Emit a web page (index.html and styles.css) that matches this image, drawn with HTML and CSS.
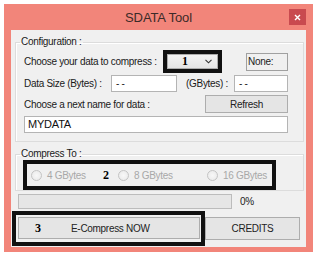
FILE: index.html
```html
<!DOCTYPE html>
<html>

<head>
    <title>SDATA Tool</title>
    <meta name="viewport" content="width=device-width, initial-scale=1.0">
    <link rel="stylesheet" href="styles.css">
</head>

<body>
    <div class="window">
        <div class="titlebar">
            <span class="title">SDATA Tool</span>
            <span class="close">
                <svg width="7" height="7" viewBox="0 0 7 7">
                    <path d="M1 1 L6 6 M6 1 L1 6" stroke="#fff" stroke-width="1.4" fill="none" />
                </svg>
            </span>
        </div>

        <div class="client">
            <fieldset class="group group-config">
                <legend>Configuration :</legend>

                <div class="row row-source">
                    <span class="label label-source">Choose your data to compress :</span>
                    <div class="mark mark-combo">
                        <div class="combo">
                            <span class="num">1</span>
                            <svg class="chevron" width="7" height="5" viewBox="0 0 7 5">
                                <path d="M0.5 0.8 L3.5 3.8 L6.5 0.8" stroke="#333" stroke-width="1.1" fill="none" />
                            </svg>
                        </div>
                    </div>
                    <span class="info">None:</span>
                </div>

                <div class="row row-size">
                    <span class="label label-bytes">Data Size (Bytes) :</span>
                    <span class="textbox tb-bytes">- -</span>
                    <span class="label label-gb">(GBytes) :</span>
                    <span class="textbox tb-gb">- -</span>
                </div>

                <div class="row row-name">
                    <span class="label">Choose a next name for data :</span>
                    <button class="btn btn-refresh">Refresh</button>
                </div>

                <div class="row row-input">
                    <span class="textbox tb-name">MYDATA</span>
                </div>
            </fieldset>

            <fieldset class="group group-size">
                <legend>Compress To :</legend>
                <div class="mark mark-radios">
                    <span class="option option-4">
                        <span class="radio"></span>4 GBytes
                    </span>
                    <span class="num num-2">2</span>
                    <span class="option option-8">
                        <span class="radio"></span>8 GBytes
                    </span>
                    <span class="option option-16">
                        <span class="radio"></span>16 GBytes
                    </span>
                </div>
            </fieldset>

            <div class="progress-row">
                <div class="progress"></div>
                <span class="percent">0%</span>
            </div>

            <div class="actions">
                <div class="mark mark-compress">
                    <button class="btn btn-compress">
                        <span class="num num-3">3</span>
                        <span>E-Compress NOW</span>
                    </button>
                </div>
                <button class="btn btn-credits">CREDITS</button>
            </div>
        </div>
    </div>
</body>

</html>
```

FILE: styles.css
```css
body {
    margin: 0;
    background: #fff;
    font-family: 'Liberation Sans', Arial, sans-serif;
    font-size: 10px;
    letter-spacing: -0.3px;
    color: #1a1a1a;
}

.window {
    margin: 4px 0 0 4px;
    width: 309px;
    height: 248px;
    background: #f2857a;
    display: flex;
    flex-direction: column;
}

.titlebar {
    height: 26px;
    display: grid;
    grid-template-columns: 1fr auto 1fr;
    align-items: center;
}

.title {
    grid-column: 2;
    font-size: 13px;
    letter-spacing: -0.1px;
    color: #3b2a28;
}

.close {
    grid-column: 3;
    justify-self: end;
    margin-right: 7px;
    width: 17px;
    height: 16px;
    background: #c94a4f;
    display: flex;
    align-items: center;
    justify-content: center;
}

.client {
    margin: 0 7px 5px 7px;
    height: 217px;
    background: #f0f0f0;
}

/* group boxes */
.group {
    margin: 6px 2px 0 4px;
    padding: 2px 15px 8px 8px;
    min-width: 0;
    border: 1px solid #dcdcdc;
    box-shadow: inset 1px 1px 0 #fff;
}

.group legend {
    margin-left: -4px;
    padding: 0 1px;
    line-height: 12px;
}

.row {
    display: flex;
    align-items: center;
}

.label {
    white-space: nowrap;
}

.row-source {
    height: 23px;
}

.label-source {
    width: 139px;
}

.mark {
    border: 4px solid #111;
    box-sizing: border-box;
}

.mark-combo {
    width: 59px;
    height: 23px;
}

.combo {
    height: 100%;
    box-sizing: border-box;
    border: 1px solid #acacac;
    background: linear-gradient(#f2f2f2, #e4e4e4);
    display: flex;
    align-items: center;
    padding: 0 5px 0 14px;
    justify-content: space-between;
}

.num {
    font-family: 'Liberation Serif', 'Times New Roman', serif;
    font-weight: bold;
    font-size: 12px;
    letter-spacing: 0;
    color: #000;
}

.info {
    margin-left: auto;
    width: 42px;
    height: 18px;
    box-sizing: border-box;
    border: 1px solid #a0a0a0;
    padding-left: 1px;
    line-height: 16px;
    color: #222;
}

.row-size {
    margin-top: 2px;
    height: 17px;
}

.label-bytes {
    width: 87px;
}

.label-gb {
    margin-left: 9px;
    width: 48px;
}

.textbox {
    box-sizing: border-box;
    height: 17px;
    border: 1px solid #b4b4b4;
    background: #fff;
    padding-left: 4px;
    line-height: 15px;
    color: #222;
}

.tb-bytes {
    width: 66px;
}

.tb-gb {
    width: 54px;
}

.row-name {
    margin-top: 3px;
    height: 18px;
    justify-content: space-between;
}

.btn {
    font-family: 'Liberation Sans', Arial, sans-serif;
    font-size: 10px;
    letter-spacing: -0.3px;
    color: #222;
    background: #e5e5e5;
    border: 1px solid #adadad;
    box-sizing: border-box;
    padding: 0;
    margin: 0;
}

.btn-refresh {
    width: 83px;
    height: 18px;
}

.row-input {
    margin-top: 3px;
}

.tb-name {
    width: 100%;
    padding-left: 3px;
    font-size: 11px;
    letter-spacing: -0.2px;
    color: #111;
}

.group-size {
    padding: 0 0 0 7px;
}

.group-size legend {
    margin-left: -3px;
}

.mark-radios {
    width: 253px;
    height: 30px;
    display: flex;
    align-items: center;
    padding-left: 4px;
}

.option {
    display: flex;
    align-items: center;
    gap: 5px;
    color: #a8a8a8;
}

.radio {
    width: 11px;
    height: 11px;
    box-sizing: border-box;
    border-radius: 50%;
    border: 1px solid #c4c4c4;
    background: radial-gradient(#f8f8f8, #e8e8e8);
}

.option-4 {
    width: 72px;
}

.option-8 {
    margin-left: 9px;
    width: 89px;
}

.progress-row {
    margin: 3px 0 0 7px;
    display: flex;
    align-items: center;
}

.progress {
    width: 214px;
    height: 15px;
    box-sizing: border-box;
    border: 1px solid #bcbcbc;
    background: #e6e6e6;
}

.percent {
    margin-left: 8px;
    color: #222;
}

.actions {
    margin: 2px 0 0 1px;
    display: flex;
    align-items: flex-start;
}

.mark-compress {
    width: 193px;
    height: 35px;
    padding: 2px 0 0 2px;
}

.btn-compress {
    width: 182px;
    height: 22px;
    display: flex;
    align-items: center;
    padding-left: 16px;
    gap: 30px;
}

.btn-credits {
    margin-top: 6px;
    width: 95px;
    height: 23px;
}
```
